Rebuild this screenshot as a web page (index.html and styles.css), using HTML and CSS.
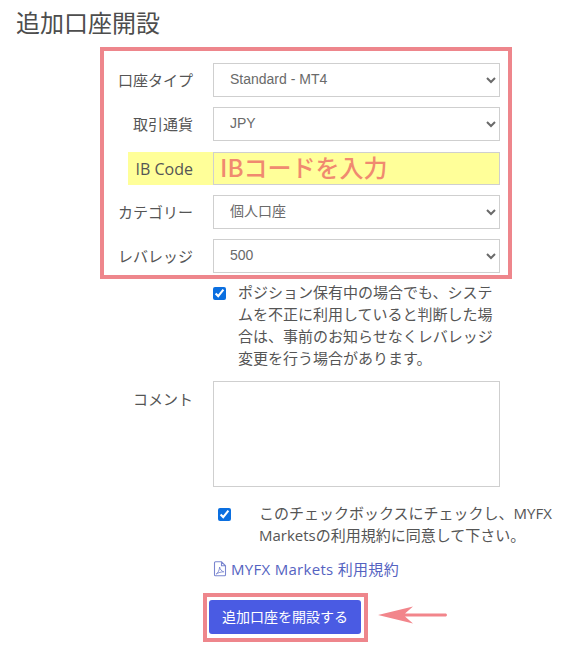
FILE: index.html
```html
<!DOCTYPE html>
<html lang="ja">
<head>
<meta charset="utf-8">
<title>追加口座開設</title>
<link rel="stylesheet" href="styles.css">
</head>
<body>
<h1 class="title">追加口座開設</h1>
<form class="form">
  <div class="callout">
    <div class="row"><label class="label">口座タイプ</label><select class="control"><option>Standard - MT4</option></select></div>
    <div class="row"><label class="label">取引通貨</label><select class="control"><option>JPY</option></select></div>
    <div class="row row-hl"><label class="label label-hl">IB Code</label><input class="control control-hl" type="text" value="IBコードを入力"></div>
    <div class="row"><label class="label">カテゴリー</label><select class="control"><option>個人口座</option></select></div>
    <div class="row"><label class="label">レバレッジ</label><select class="control"><option>500</option></select></div>
  </div>
  <div class="check check-one">
    <input class="box" type="checkbox" checked>
    <p class="check-text">ポジション保有中の場合でも、システムを不正に利用していると判断した場合は、事前のお知らせなくレバレッジ変更を行う場合があります。</p>
  </div>
  <div class="comment">
    <label class="label comment-label">コメント</label>
    <textarea class="area"></textarea>
  </div>
  <div class="check check-two">
    <input class="box" type="checkbox" checked>
    <p class="check-text-wide">このチェックボックスにチェックし、MYFX Marketsの利用規約に同意して下さい。</p>
  </div>
  <a class="terms" href="#">
    <svg class="pdf" viewBox="0 0 14 16" width="14" height="16" aria-hidden="true"><path d="M2.5 .8h6l4 4v9a1 1 0 0 1-1 1h-9a1 1 0 0 1-1-1v-12a1 1 0 0 1 1-1zM8.5 .8v4h4" fill="none" stroke="currentColor" stroke-width="1.1"/><path d="M3.2 13c1.8-1 3.3-4 3.4-7 .5 2.500 2 4.300 4.200 4.800-2.500 0-5.500.8-7.600 2.200z" fill="none" stroke="currentColor" stroke-width=".9"/></svg>
    <span class="terms-text">MYFX Markets 利用規約</span>
  </a>
  <div class="actions">
    <div class="btn-frame"><button class="submit" type="button">追加口座を開設する</button></div>
    <svg class="arrow" viewBox="0 0 70 18" width="70" height="18" aria-hidden="true"><path d="M0 9 L35 0.500 L27 7.500 L68 7.500 Q70 9 68 10.500 L27 10.500 L35 17.500 Z" fill="#f2858b"/></svg>
  </div>
</form>
</body>
</html>
```
FILE: styles.css
```css
* { box-sizing: border-box; }
html, body { margin: 0; padding: 0; background: #fff; }
body {
  width: 574px;
  height: 655px;
  overflow: hidden;
  font-family: "Open Sans", "Noto Sans CJK JP", sans-serif;
  font-size: 15px;
  color: #555;
}
.title {
  margin: 0;
  padding: 7px 0 0 16px;
  height: 47px;
  font-size: 24px;
  line-height: 32px;
  font-weight: 400;
  color: #4d4d4d;
}
.form { display: block; }
.callout {
  margin-left: 100px;
  width: 412px;
  height: 232px;
  border: 4px solid #ee868c;
  padding: 12px 8px 2px 0;
  display: flex;
  flex-direction: column;
  gap: 10px;
}
.row {
  display: grid;
  grid-template-columns: 109px 287px;
  align-items: center;
  height: 34px;
}
.label {
  padding-right: 20px;
  text-align: right;
  white-space: nowrap;
  line-height: 22px;
}
.label-hl {
  margin-left: 24px;
  height: 33px;
  line-height: 35px;
  font-size: 16px;
  background: #ffff99;
}
.control {
  width: 287px;
  height: 34px;
  border: 1px solid #cfcfcf;
  border-radius: 0;
  background-color: #fff;
  font-family: "Liberation Sans", "Noto Sans CJK JP", sans-serif;
  font-size: 14px;
  color: #6a6a6a;
  padding: 0 12px 2px;
}
.control-hl {
  height: 33px;
  background: #ffff99;
  color: #f08a70;
  font-family: "Noto Sans CJK JP", sans-serif;
  font-size: 24px;
  font-weight: 500;
  padding: 0 6px 4px;
  outline: none;
}
.check { display: flex; align-items: flex-start; }
.box {
  width: 13px;
  height: 13px;
  margin: 0;
  accent-color: #0b6fe0;
  flex: none;
}
.check-one { margin: 8px 0 0 213px; width: 287px; height: 94px; }
.check-text {
  margin: -6px 0 0 12px;
  width: 262px;
  line-height: 22px;
}
.comment {
  margin: 0;
  display: grid;
  grid-template-columns: 213px 287px;
  height: 106px;
}
.comment-label { padding-top: 7px; }
.area {
  display: block;
  width: 287px;
  height: 106px;
  border: 1px solid #cfcfcf;
  border-radius: 0;
  resize: none;
  background: #fff;
}
.check-two { margin: 21px 0 0 218px; width: 320px; height: 51px; }
.check-text-wide {
  margin: -6px 0 0 28px;
  width: 300px;
  flex: none;
  line-height: 22px;
}
.terms {
  display: flex;
  align-items: center;
  gap: 4px;
  margin: -2px 0 0 213px;
  height: 22px;
  color: #5563c1;
  text-decoration: none;
  white-space: nowrap;
}
.terms-text { letter-spacing: .3px; }
.pdf { flex: none; color: #7a86cf; margin-top: 2px; }
.actions {
  display: flex;
  align-items: center;
  gap: 10px;
  margin: 14px 0 0 203px;
}
.btn-frame {
  border: 4px solid #ee868c;
  padding: 3px 3px 4px 2px;
  width: 165px;
  height: 49px;
}
.submit {
  display: block;
  width: 152px;
  height: 34px;
  border: 0;
  border-radius: 3px;
  background: #4a5be3;
  color: #fff;
  font-family: "Noto Sans CJK JP", sans-serif;
  font-size: 14px;
  padding: 0 0 3px;
}
.arrow { flex: none; margin-bottom: 5px; }
```
